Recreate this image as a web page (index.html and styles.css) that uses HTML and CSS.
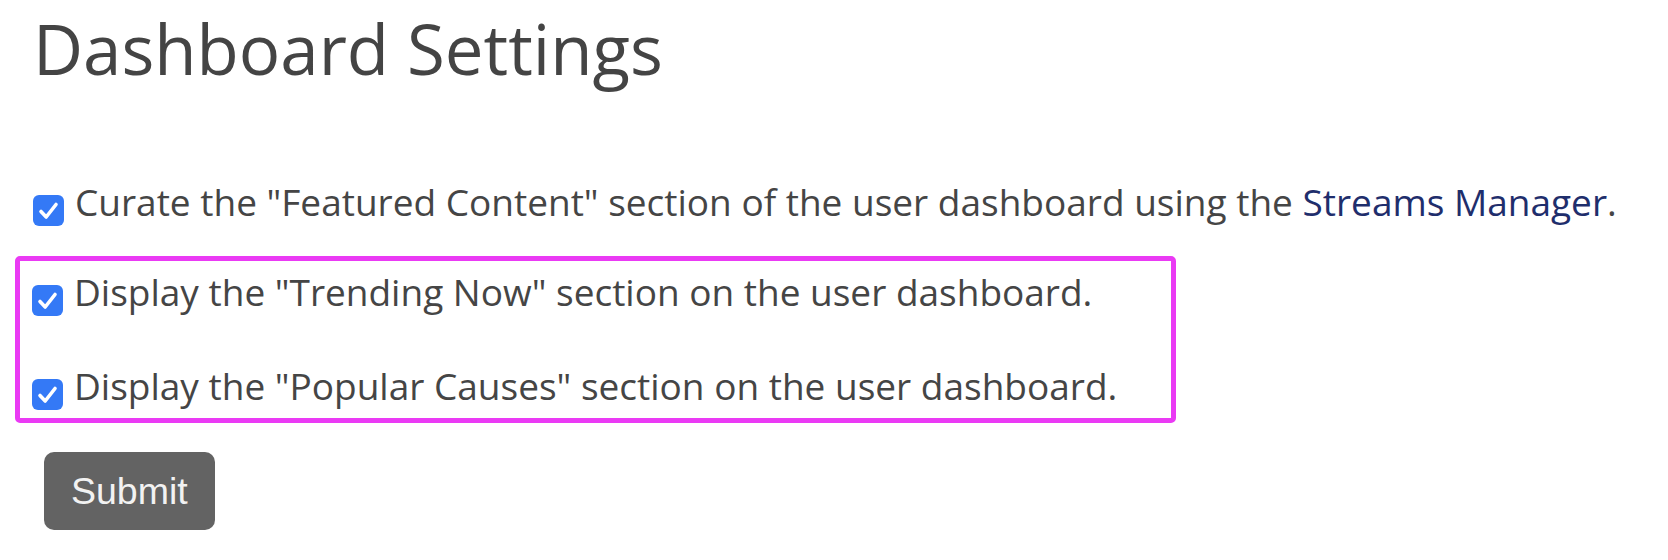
FILE: index.html
```html
<!DOCTYPE html>
<html lang="en">
<head>
<meta charset="utf-8">
<title>Dashboard Settings</title>
<link rel="stylesheet" href="styles.css">
</head>
<body>
<main class="page">
  <h1 class="title">Dashboard Settings</h1>
  <form class="settings">
    <label class="option option-first">
      <span class="check"><svg viewBox="0 0 31 31" width="31" height="31"><path d="M8 16.5 L13.2 22 L23 9.5" fill="none" stroke="#fff" stroke-width="3.6" stroke-linecap="round" stroke-linejoin="round"/></svg></span>
      <span class="text">Curate the "Featured Content" section of the user dashboard using the <a class="link" href="#">Streams Manager</a>.</span>
    </label>
    <div class="highlight">
      <label class="option">
        <span class="check"><svg viewBox="0 0 31 31" width="31" height="31"><path d="M8 16.5 L13.2 22 L23 9.5" fill="none" stroke="#fff" stroke-width="3.6" stroke-linecap="round" stroke-linejoin="round"/></svg></span>
        <span class="text">Display the "Trending Now" section on the user dashboard.</span>
      </label>
      <label class="option option-last">
        <span class="check"><svg viewBox="0 0 31 31" width="31" height="31"><path d="M8 16.5 L13.2 22 L23 9.5" fill="none" stroke="#fff" stroke-width="3.6" stroke-linecap="round" stroke-linejoin="round"/></svg></span>
        <span class="text">Display the "Popular Causes" section on the user dashboard.</span>
      </label>
    </div>
    <button class="submit" type="button">Submit</button>
  </form>
</main>
</body>
</html>
```
FILE: styles.css
```css
html, body {
  margin: 0;
  padding: 0;
  background: #ffffff;
}

.page {
  padding: 8px 0 0 33px;
  font-family: "Open Sans", "Noto Sans", sans-serif;
  color: #454545;
}

.title {
  margin: 0;
  font-size: 69px;
  line-height: 80px;
  font-weight: 400;
  color: #444444;
}

.settings {
  display: flex;
  flex-direction: column;
  align-items: flex-start;
  margin-top: 90px;
}

.option {
  display: flex;
  align-items: flex-start;
  gap: 11px;
  font-size: 37px;
  line-height: 48px;
  height: 48px;
  white-space: nowrap;
}

.option + .option {
  margin-top: 46px;
}

.check {
  flex: none;
  width: 31px;
  height: 31px;
  margin-top: 17px;
  border-radius: 6px;
  background: #3479f6;
  display: flex;
}

.link {
  color: #1f2e6c;
  text-decoration: none;
}

.highlight {
  margin: 30px 0 0 -18px;
  padding: 7px 60px 8px 12px;
  border: 5.5px solid #ea3af4;
  border-radius: 5px;
  width: 1079px;
}

.submit {
  margin: 29px 0 0 11px;
  height: 78px;
  padding: 0 27px;
  border: none;
  border-radius: 10px;
  background: #636363;
  color: #f2f2f2;
  font-family: "Liberation Sans", Arial, sans-serif;
  font-size: 37.5px;
}
```
